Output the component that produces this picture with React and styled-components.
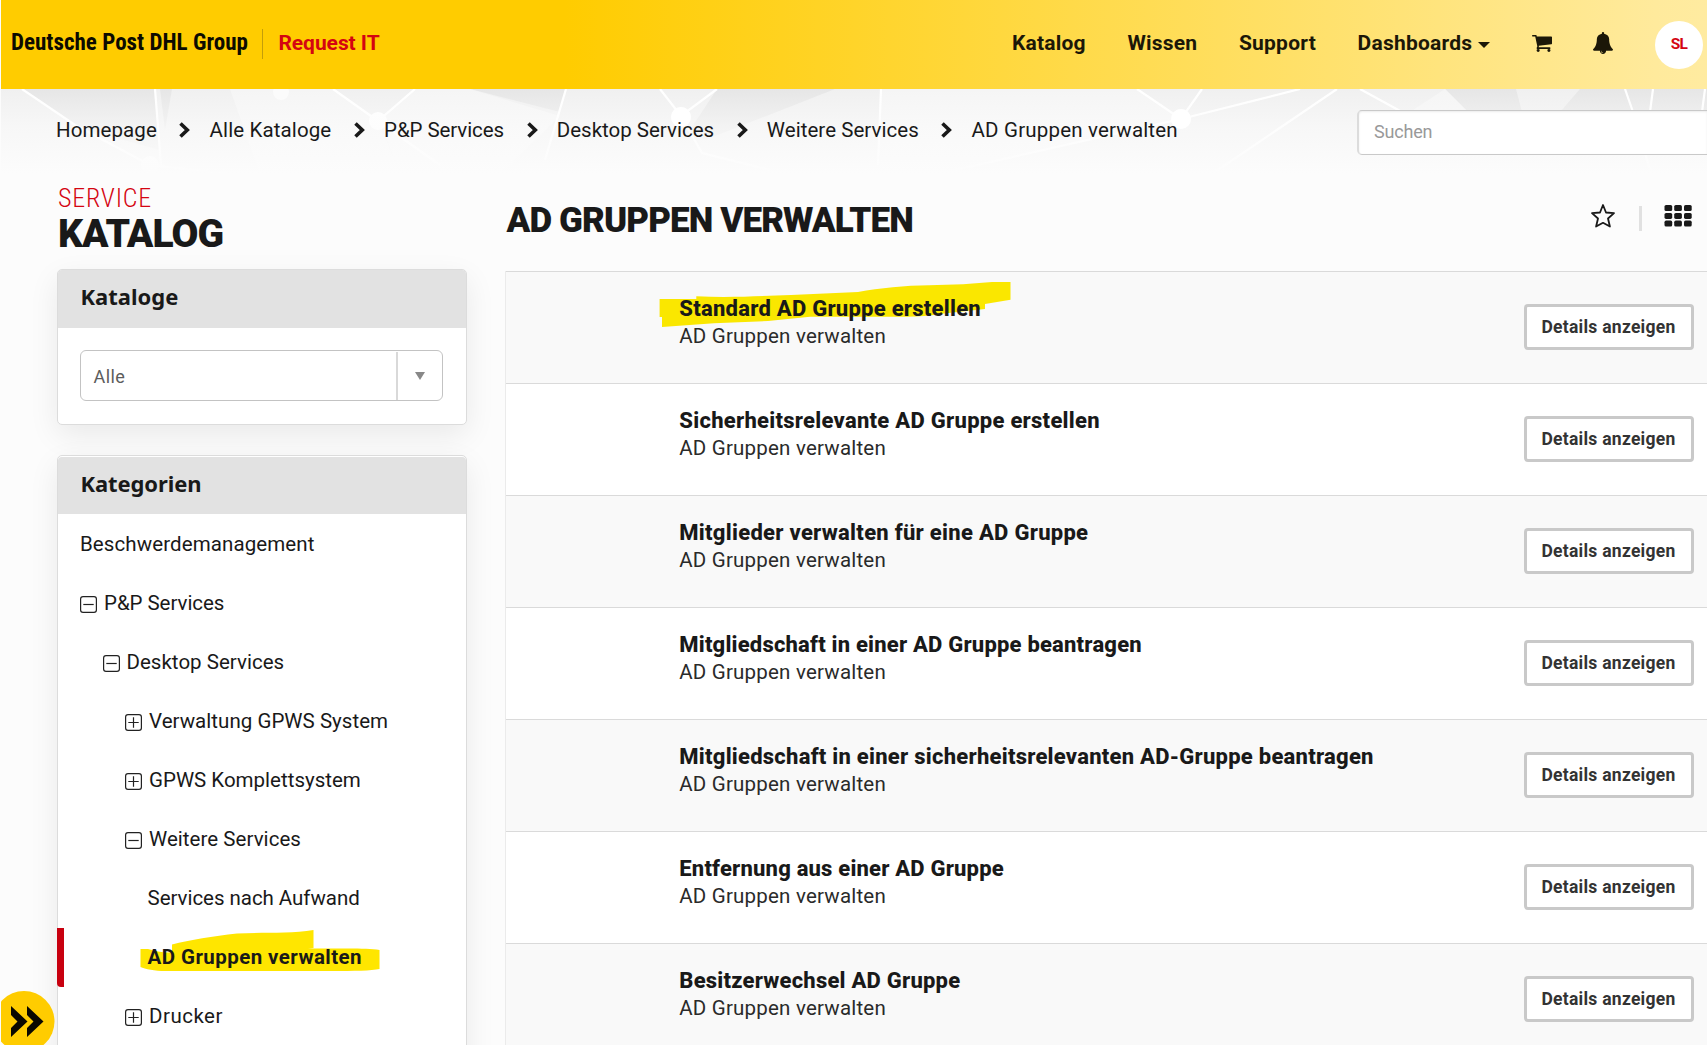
import React from 'react';
import styled, { createGlobalStyle, css } from 'styled-components';

const GlobalStyle = createGlobalStyle`
  * { box-sizing: border-box; }
  body { margin: 0; background: #fcfcfc; font-family: Roboto, "Liberation Sans", sans-serif; color: #191919; }
  svg { display: block; flex: none; }
`;

const Page = styled.div`
  position: relative;
  height: 1045px;
  overflow: hidden;
  white-space: nowrap;
`;

/* ---------- header ---------- */
const Header = styled.header`
  display: flex;
  align-items: center;
  height: 89px;
  margin-left: 1px;
  padding: 0 4px 3px 10px;
  background: linear-gradient(90deg, #fc0 0%, #fc0 33%, #ffea9c 97%, #ffeba0 100%);
`;
const Brand = styled.div`
  font-size: 23px;
  font-weight: 700;
  font-stretch: 87.5%;
  letter-spacing: 0.02px;
  line-height: 28px;
  color: #0d0b00;
`;
const BrandDivider = styled.i`
  width: 1px;
  height: 30px;
  margin: 1px 15px 0 14.5px;
  background: #c39d0a;
`;
const AppName = styled.div`
  font-size: 21px;
  font-weight: 700;
  letter-spacing: -0.05px;
  color: #d40511;
`;
const Nav = styled.nav`
  display: flex;
  align-items: center;
  gap: 41.6px;
  margin-left: auto;
  font-size: 21px;
  font-weight: 700;
  letter-spacing: 0.22px;
  color: #1b1708;
`;
const NavLink = styled.span`
  display: flex;
  align-items: center;
  gap: 6px;
`;
const Caret = styled.i`
  margin-top: 4px;
  border: 6px solid transparent;
  border-top-color: #1b1708;
  border-bottom: 0;
`;
const Avatar = styled.span`
  display: grid;
  place-items: center;
  width: 48px;
  height: 48px;
  margin-top: 3px;
  padding-bottom: 2px;
  border-radius: 50%;
  background: #fff;
  color: #d40511;
  font-size: 15.5px;
  letter-spacing: -0.8px;
`;

/* ---------- sub header ---------- */
const Backdrop = styled.svg`
  position: absolute;
  top: 89px;
  left: 1px;
`;
const TopBar = styled.div`
  position: relative;
  display: flex;
  align-items: center;
  height: 66px;
  padding: 21px 0 0 56px;
`;
const Crumbs = styled.div`
  display: flex;
  align-items: center;
  padding-bottom: 6px;
  font-size: 20.5px;
  line-height: 24px;
  svg { margin: 1px 19.2px 0 22.5px; }
`;
const Crumb = styled.span`
  letter-spacing: ${(p) => p.$ls}px;
`;
const Search = styled.div`
  width: 350px;
  height: 45px;
  margin-left: auto;
  padding-left: 15px;
  border: 1px solid #c9c9c9;
  border-left-width: 2px;
  border-left-color: #dcdcdc;
  border-right: 0;
  border-radius: 5px 0 0 5px;
  background: #fff;
  box-shadow: inset 0 1px 2px rgba(0, 0, 0, 0.08);
  font-size: 18px;
  line-height: 42px;
  letter-spacing: -0.2px;
  color: #999;
`;

/* ---------- content ---------- */
const Content = styled.main`
  position: relative;
  display: flex;
  gap: 38px;
  padding-left: 57px;
`;
const Sidebar = styled.aside`
  width: 410px;
  flex: none;
  padding-top: 28px;
`;
const Kicker = styled.div`
  padding-left: 1px;
  font-size: 26px;
  font-weight: 300;
  font-stretch: 87.5%;
  line-height: 31px;
  letter-spacing: 0.8px;
  color: #d40511;
`;
const SideTitle = styled.h2`
  margin: 0 0 14px;
  padding-left: 1px;
  font-size: 39px;
  font-weight: 900;
  line-height: 41px;
  letter-spacing: -0.9px;
`;
const Panel = styled.section`
  height: ${(p) => p.$height}px;
  margin-bottom: 30px;
  padding-top: ${(p) => p.$inset || 0}px;
  border: 1px solid #dcdcdc;
  border-radius: 5px;
  background: #fff;
  box-shadow: 0 10px 30px rgba(0, 0, 0, 0.08);
`;
const PanelHead = styled.h3`
  height: ${(p) => p.$height}px;
  margin: 0;
  padding-left: 22.5px;
  border-radius: 4px 4px 0 0;
  background: #e2e2e2;
  font: 700 22px/${(p) => p.$height - 5}px "Noto Sans", sans-serif;
  letter-spacing: ${(p) => p.$ls}px;
`;
const Select = styled.div`
  display: flex;
  align-items: center;
  height: 51px;
  margin: 22px 23px 0 22px;
  border: 1px solid #c3c3c3;
  border-radius: 6px;
  font-size: 18px;
  color: #5c5c5c;
`;
const SelectValue = styled.span`
  flex: 1;
  padding: 1px 0 0 12.5px;
  letter-spacing: 0.4px;
`;
const SelectArrow = styled.span`
  display: grid;
  place-items: center;
  width: 46px;
  height: 48px;
  border-left: 2px solid #d9d9d9;
  &::after {
    content: "";
    border: 5px solid transparent;
    border-top: 8px solid #888;
    border-bottom: 0;
  }
`;
const TreeRow = styled.div`
  position: relative;
  display: flex;
  align-items: center;
  gap: 7px;
  height: 59.1px;
  padding-left: ${(p) => 22 + p.$level * 22.5}px;
  font-size: 20.5px;
  letter-spacing: ${(p) => p.$ls}px;
  svg { margin-top: 3px; }
  ${(p) => p.$active && css`
    font-weight: 700;
    &::before {
      content: "";
      position: absolute;
      left: -1px;
      top: 0;
      width: 7px;
      height: 59px;
      border-radius: 0 0 0 4px;
      background: #c8000f;
    }
  `}
`;
const TreeText = styled.span`
  position: relative;
`;
const TreeMarker = styled.svg`
  && { margin: 0; }
  position: absolute;
  left: 0;
  top: 0;
`;

/* ---------- result list ---------- */
const Main = styled.div`
  flex: 1;
  min-width: 0;
`;
const MainHead = styled.div`
  display: flex;
  align-items: flex-start;
  height: 116px;
  padding: 45px 15px 0 1.5px;
`;
const Title = styled.h1`
  margin: 1px auto 0 0;
  font-size: 35px;
  font-weight: 900;
  line-height: 40px;
  letter-spacing: -0.9px;
`;
const ToolDivider = styled.i`
  width: 3px;
  height: 25px;
  margin: 6px 22px 0 23px;
  background: #e1e1e1;
`;
const ResultList = styled.div`
  border-left: 1px solid #ebebeb;
`;
const ResultRow = styled.article`
  position: relative;
  display: flex;
  justify-content: space-between;
  height: 112px;
  padding: 23px 13.5px 0 173.3px;
  border-top: 1px solid #dadada;
  background: #fff;
  &:nth-child(odd) { background: #f9f9f9; }
`;
const ResultText = styled.div`
  position: relative;
`;
const ResultTitle = styled.div`
  font-size: 22px;
  font-weight: 800;
  line-height: 28px;
  letter-spacing: ${(p) => p.$ls}px;
`;
const ResultSub = styled.div`
  font-size: 20.5px;
  line-height: 27px;
  letter-spacing: 0.2px;
  color: #2a2a2a;
`;
const RowMarker = styled.svg`
  position: absolute;
  left: 134px;
  top: 0;
`;
const DetailsButton = styled.button`
  width: 170px;
  height: 46px;
  margin: 9px 0 0;
  padding: 0;
  border: 3px solid #c9c9c9;
  border-radius: 4px;
  background: #fff;
  font: 700 17.5px Roboto, sans-serif;
  letter-spacing: 0.25px;
  color: #333;
`;
const Expander = styled.div`
  position: absolute;
  left: 1px;
  bottom: 0;
  width: 54px;
  height: 54px;
  overflow: hidden;
`;

const Chevron = () => (
  <svg width="11" height="16" viewBox="0 0 11 16">
    <path d="M1.5 1.500 8.300 8 1.500 14.500" fill="none" stroke="#191919" strokeWidth="3.6" />
  </svg>
);
const CartIcon = () => (
  <svg width="20" height="17" viewBox="0 256 1664 1408" preserveAspectRatio="none" fill="#1b1708">
    <path d="M640 1536q0 52-38 90t-90 38-90-38-38-90 38-90 90-38 90 38 38 90zm896 0q0 52-38 90t-90 38-90-38-38-90 38-90 90-38 90 38 38 90zm128-1088v512q0 24-16.500 42.500t-40.500 21.500l-1044 122q13 60 13 70 0 16-24 64h920q26 0 45 19t19 45-19 45-45 19h-1024q-26 0-45-19t-19-45q0-11 8-31.500t16-36 21.500-40 15.500-29.500l-177-823h-204q-26 0-45-19t-19-45 19-45 45-19h256q16 0 28.500 6.500t19.500 15.500 13 24.500 8 26 5.500 29.500 4.500 26h1201q26 0 45 19t19 45z" />
  </svg>
);
const BellIcon = () => (
  <svg width="20" height="22" viewBox="64 0 1664 1792" preserveAspectRatio="none" fill="#1b1708">
    <path d="M912 1696q0-16-16-16-59 0-101.500-42.500t-42.500-101.500q0-16-16-16t-16 16q0 73 51.500 124.500t124.500 51.500q16 0 16-16zm816-288q0 52-38 90t-90 38h-448q0 106-75 181t-181 75-181-75-75-181h-448q-52 0-90-38t-38-90q50-42 91-88t85-119.500 74.500-158.500 50-206 19.500-260q0-152 117-282.500t307-158.500q-8-19-8-39 0-40 28-68t68-28 68 28 28 68q0 20-8 39 190 28 307 158.500t117 282.500q0 139 19.500 260t50 206 74.500 158.500 85 119.500 91 88z" />
  </svg>
);
const StarIcon = () => (
  <svg width="26" height="30" viewBox="0 0 26 30">
    <path d="M13 5 16 12.500 24 13.200 18 18.500 19.900 26.500 13 22.800 6.100 26.500 8 18.500 2 13.200 10 12.500Z" fill="none" stroke="#191919" strokeWidth="1.8" strokeLinejoin="round" />
  </svg>
);
const GridIcon = () => (
  <svg width="28" height="27" viewBox="0 0 28 27" fill="#191919">
    {[5, 12.900, 20.600].map((y) => [0.5, 10.200, 20].map((x) => (
      <rect key={`${x}-${y}`} x={x} y={y} width="7.7" height="6" rx="1.6" />
    )))}
  </svg>
);
const Toggle = ({ open }) => (
  <svg width="17" height="17" viewBox="0 0 17 17" fill="none" stroke="#222" strokeWidth="1.2">
    <rect x="0.6" y="0.6" width="15.8" height="15.8" rx="2.4" />
    <path d={open ? 'M3.3 8.5H13.7' : 'M3.3 8.5H13.7M8.5 3.3V13.7'} />
  </svg>
);
const Network = () => (
  <Backdrop width="1706" height="85" viewBox="1 89 1706 85">
    <defs>
      <linearGradient id="fade" x1="0" y1="0" x2="0" y2="1">
        <stop offset="0" stopColor="#fcfcfc" stopOpacity="0" />
        <stop offset="0.45" stopColor="#fcfcfc" stopOpacity="0.6" />
        <stop offset="1" stopColor="#fcfcfc" />
      </linearGradient>
    </defs>
    <rect x="1" y="89" width="1706" height="85" fill="#f0f0f0" />
    <g fill="#e6e6e6">
      <path d="M22 89H155L160 150 80 128ZM160 89H172L165 130Z" />
      <path d="M470 89H566L560 112ZM717 89H835L705 140 690 130Z" />
      <path d="M1445 89 1468 112H1522L1516 89ZM1580 89 1560 112H1707V89Z" />
    </g>
    <g fill="#f5f5f5">
      <path d="M230 89H333L378 120 400 174H260ZM880 89H1137L1181 119 960 170H880ZM1445 89 1468 112H1410Z" />
      <path d="M415 89H470L560 116 500 174H400L380 121Z" />
    </g>
    <g fill="none" stroke="#fff" strokeWidth="2.2">
      <path d="M22 89 75 125 150 165M155 89 161 165M150 165 230 174" />
      <path d="M333 89 378 121 415 89M378 121 440 165M566 89 545 160" />
      <path d="M660 89 681 116 717 89M681 116 702 153 770 170M881 89 878 165" />
      <path d="M1137 89 1181 119 1202 89M1181 119 1300 89M1181 119 955 170M1337 89 1215 172M1360 89 1402 112" />
      <path d="M1625 89 1633 112 1650 170M1653 89 1650 112M1705 89 1702 112" />
    </g>
    <g fill="#fff">
      <circle cx="150" cy="165" r="9" />
      <circle cx="281" cy="92" r="8" opacity="0.6" />
      <circle cx="378" cy="121" r="9" />
      <circle cx="681" cy="117" r="10" />
      <circle cx="1181" cy="119" r="10" />
    </g>
    <rect x="1" y="89" width="1706" height="85" fill="url(#fade)" />
    <g fill="#fff" opacity="0.7">
      <circle cx="681" cy="117" r="10" />
      <circle cx="1181" cy="119" r="10" />
    </g>
  </Backdrop>
);

const crumbs = [
  ['Homepage', 0.08],
  ['Alle Kataloge', 0.12],
  ['P&P Services', -0.08],
  ['Desktop Services', 0],
  ['Weitere Services', 0.05],
  ['AD Gruppen verwalten', 0.18],
];
const tree = [
  { label: 'Beschwerdemanagement', level: 0, ls: 0.1 },
  { label: 'P&P Services', level: 0, open: true, ls: -0.05 },
  { label: 'Desktop Services', level: 1, open: true, ls: 0.02 },
  { label: 'Verwaltung GPWS System', level: 2, open: false, ls: 0.03 },
  { label: 'GPWS Komplettsystem', level: 2, open: false, ls: 0 },
  { label: 'Weitere Services', level: 2, open: true, ls: 0.04 },
  { label: 'Services nach Aufwand', level: 3, ls: -0.04 },
  { label: 'AD Gruppen verwalten', level: 3, active: true, ls: 0.43 },
  { label: 'Drucker', level: 2, open: false, ls: 0.5 },
];
const results = [
  ['Standard AD Gruppe erstellen', 0.25],
  ['Sicherheitsrelevante AD Gruppe erstellen', 0.27],
  ['Mitglieder verwalten für eine AD Gruppe', 0.28],
  ['Mitgliedschaft in einer AD Gruppe beantragen', 0.2],
  ['Mitgliedschaft in einer sicherheitsrelevanten AD-Gruppe beantragen', 0.25],
  ['Entfernung aus einer AD Gruppe', 0.19],
  ['Besitzerwechsel AD Gruppe', 0.22],
];

export default function App() {
  return (
    <Page>
      <GlobalStyle />
      <Header>
        <Brand>Deutsche Post DHL Group</Brand>
        <BrandDivider />
        <AppName>Request IT</AppName>
        <Nav>
          <NavLink>Katalog</NavLink>
          <NavLink>Wissen</NavLink>
          <NavLink>Support</NavLink>
          <NavLink>Dashboards<Caret /></NavLink>
          <CartIcon />
          <BellIcon />
          <Avatar>SL</Avatar>
        </Nav>
      </Header>
      <Network />
      <TopBar>
        <Crumbs>
          {crumbs.map(([label, ls], i) => (
            <React.Fragment key={label}>
              {i > 0 && <Chevron />}
              <Crumb $ls={ls}>{label}</Crumb>
            </React.Fragment>
          ))}
        </Crumbs>
        <Search>Suchen</Search>
      </TopBar>
      <Content>
        <Sidebar>
          <Kicker>SERVICE</Kicker>
          <SideTitle>KATALOG</SideTitle>
          <Panel $height={156}>
            <PanelHead $height={58} $ls={0}>Kataloge</PanelHead>
            <Select>
              <SelectValue>Alle</SelectValue>
              <SelectArrow />
            </Select>
          </Panel>
          <Panel $height={640} $inset={1}>
            <PanelHead $height={57} $ls={-0.1}>Kategorien</PanelHead>
            {tree.map((n) => (
              <TreeRow key={n.label} $level={n.level} $ls={n.ls} $active={n.active}>
                {n.active && (
                  <TreeMarker width="408" height="59" viewBox="58 928 408 59">
                    <path fill="#ffe600" d="M140.500 949H148C155 951 163 953 172 952.500V944.500C190 940 213 936 237 933.500 262 932 290 934 313.500 930V948L308 948.500C335 949 365 947.500 379.500 950V969C368 971.500 340 971 300 971H165C155 971 145 969 140.500 967Z" />
                  </TreeMarker>
                )}
                {n.open !== undefined && <Toggle open={n.open} />}
                <TreeText>{n.label}</TreeText>
              </TreeRow>
            ))}
          </Panel>
        </Sidebar>
        <Main>
          <MainHead>
            <Title>AD GRUPPEN VERWALTEN</Title>
            <StarIcon />
            <ToolDivider />
            <GridIcon />
          </MainHead>
          <ResultList>
            {results.map(([label, ls], i) => (
              <ResultRow key={label}>
                {i === 0 && (
                  <RowMarker width="400" height="60" viewBox="640 272 400 60">
                    <path fill="#fae700" d="M659.600 299H696.300V296.300C730 298 760 296 791 295L858 292C880 288 905 285.500 929 285.300L963 284.300 992 282H1010.500V299.700L985 304V309L944 313.500C930 316 918 316.700 906 316.700H810L768 321 714 323.300 662 327V317H659.600Z" />
                  </RowMarker>
                )}
                <ResultText>
                  <ResultTitle $ls={ls}>{label}</ResultTitle>
                  <ResultSub>AD Gruppen verwalten</ResultSub>
                </ResultText>
                <DetailsButton>Details anzeigen</DetailsButton>
              </ResultRow>
            ))}
          </ResultList>
        </Main>
      </Content>
      <Expander>
        <svg width="54" height="54" viewBox="1 991 54 54">
          <circle cx="24" cy="1021.500" r="30.500" fill="#fc0" />
          <path d="M11 1006 27.500 1021.500 11 1037V1028L17.500 1021.500 11 1015ZM27 1006 43.500 1021.500 27 1037V1028L33.500 1021.500 27 1015Z" fill="#0a0800" />
        </svg>
      </Expander>
    </Page>
  );
}
